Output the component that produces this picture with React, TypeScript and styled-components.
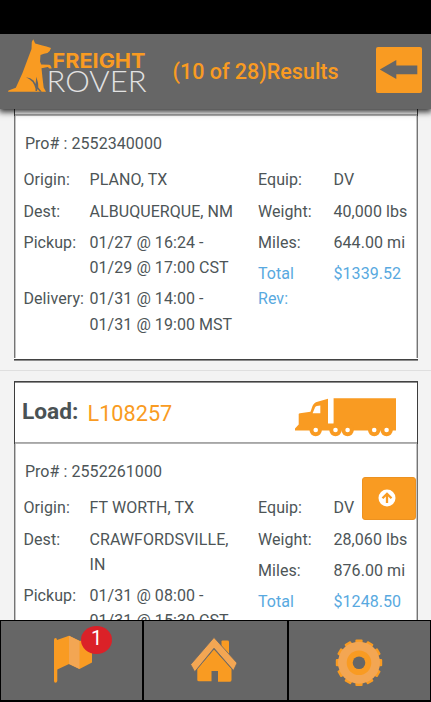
import React from "react";
import styled, { createGlobalStyle } from "styled-components";

const ORANGE = "#f99b22";
const PALE = "#f3a653";
const GREY = "#666666";

const GlobalStyle = createGlobalStyle`
  * { box-sizing: border-box; }
  body { margin: 0; background: #f3f3f3; font-family: Roboto, "Liberation Sans", sans-serif; }
`;

const Screen = styled.div`
  display: flex;
  flex-direction: column;
  width: 431px;
  height: 702px;
  overflow: hidden;
  background: #f3f3f3;
`;

const StatusBar = styled.div`
  flex: 0 0 34px;
  background: #000;
`;

const Header = styled.header`
  flex: 0 0 75px;
  display: flex;
  align-items: flex-start;
  background: ${GREY};
  box-shadow: 0 2px 6px 1px rgba(0, 0, 0, 0.8);
  z-index: 2;
`;

const Logo = styled.svg`
  flex: 0 0 160px;
  height: 75px;
`;

const Title = styled.h1`
  flex: 1;
  margin: 24px 0 0 12.5px;
  font-size: 21.5px;
  line-height: 28px;
  font-weight: 500;
  white-space: nowrap;
  color: ${ORANGE};
`;

const BackButton = styled.button`
  width: 46px;
  height: 46px;
  margin: 12.5px 9px 0 0;
  padding: 0;
  border: 0;
  border-radius: 2px;
  background: ${ORANGE};
  svg { display: block; }
`;

const List = styled.main`
  flex: 1;
  min-height: 0;
  overflow: hidden;
`;

const Slot = styled.section<{ $scrolled?: boolean }>`
  height: 328px;
  margin-top: ${(p) => (p.$scrolled ? "-66px" : "0")};
  padding: 10px 13.5px;
  border-bottom: 1px solid #dfdfdf;
`;

const Card = styled.article`
  height: 307px;
  border-top: 1px solid #424242;
  border-bottom: 1px solid #424242;
  box-shadow: 0 1px #8c8c8c, inset 0 1px #8c8c8c;
  background: #fff;
`;

const CardHead = styled.div`
  display: flex;
  align-items: flex-start;
  height: 62px;
  padding-left: 7.5px;
  border: solid #3c3c3c;
  border-width: 0 1px;
  box-shadow: inset 0 -1px #b2b2b2, inset 0 -2px #a6a6a6, inset 0 1px #8c8c8c;
`;

const LoadLabel = styled.span`
  margin-top: 16px;
  width: 65.5px;
  font-size: 22.700px;
  line-height: 28px;
  font-weight: 700;
  color: #4a5254;
`;

const LoadNumber = styled.span`
  flex: 1;
  margin-top: 18px;
  font-size: 21.700px;
  line-height: 28px;
  color: ${ORANGE};
`;

const Truck = styled.svg`
  width: 102px;
  height: 40px;
  margin: 15px 20px 0 0;
`;

const CardBody = styled.div`
  height: 242px;
  padding: 15px 0 0 9px;
  border: solid #747474;
  border-width: 0 1px;
  box-shadow: inset 1px 0 #c4c4c4, inset -1px 0 #c4c4c4;
  font-size: 16px;
  line-height: 25.25px;
  letter-spacing: 0.06px;
  color: #4d5557;
`;

const Pro = styled.div`
  margin: 0 0 11px 1.4px;
  letter-spacing: 0.06px;
`;

const Columns = styled.div`
  display: grid;
  grid-template-columns: 234.5px 1fr;
  align-items: start;
`;

const Fields = styled.dl<{ $label: number }>`
  display: grid;
  grid-template-columns: ${(p) => p.$label}px 1fr;
  row-gap: 6px;
  margin: 0;
  white-space: pre-line;
`;

const Cell = styled.div<{ $blue?: boolean }>`
  color: ${(p) => (p.$blue ? "#58a9e0" : "inherit")};
`;

const TopButton = styled.button`
  position: absolute;
  left: 362px;
  top: 477px;
  display: flex;
  align-items: flex-start;
  width: 54px;
  height: 43px;
  padding: 11px 0 0 14.5px;
  border: 1px solid #ec9221;
  border-radius: 3px;
  background: ${ORANGE};
  z-index: 3;
`;

const Nav = styled.nav`
  flex: 0 0 82px;
  display: grid;
  grid-template-columns: 141px 143px 141px;
  gap: 2px;
  padding: 1px 1px 2px;
  background: #000;
  z-index: 2;
`;

const Tab = styled.div`
  position: relative;
  background: ${GREY};
  svg { display: block; width: 100%; height: 79px; }
`;

const Badge = styled.span`
  position: absolute;
  left: 80px;
  top: 5px;
  width: 31px;
  height: 28px;
  border-radius: 50%;
  background: #db2128;
  color: #fff;
  font-size: 20px;
  line-height: 24px;
  text-align: center;
`;

type Field = [string, string];

function LoadCard({ load, pro, left, right, rev, scrolled }: {
  load?: string; pro: string; left: Field[]; right: Field[]; rev: string; scrolled?: boolean;
}) {
  return (
    <Slot $scrolled={scrolled}>
      <Card>
        <CardHead>
          {load && (
            <>
              <LoadLabel>Load:</LoadLabel>
              <LoadNumber>{load}</LoadNumber>
              <Truck viewBox="295 397 102 40">
                <g fill={ORANGE}>
                  <path d="M333.500 398.200H396V430.500H295V428.500L298.700 424.500V414Q299 413.300 300 413.300L310.500 411.700L312.500 406Q314 402.500 317.500 401.800L328 398.800V423.500H333.500Z" />
                  {[315.7, 335.5, 347.6, 374.2, 386.6].map((x) => (
                    <circle key={x} cx={x} cy="430" r="6.200" />
                  ))}
                </g>
                <path d="M328.900 397.800H333.200V422.700H328.900Z" fill="#fff" />
                <path d="M312.600 413.300L315 407.500Q316 405.600 320.300 405.600V413.300Z" fill="#fff" />
                <g fill="#fff">
                  {[315.7, 335.5, 347.6, 374.2, 386.6].map((x) => (
                    <circle key={x} cx={x} cy="430" r="2.300" />
                  ))}
                </g>
              </Truck>
            </>
          )}
        </CardHead>
        <CardBody>
          <Pro>Pro# : {pro}</Pro>
          <Columns>
            <Fields $label={66}>
              {left.map(([k, v]) => (
                <React.Fragment key={k}><Cell>{k}</Cell><Cell>{v}</Cell></React.Fragment>
              ))}
            </Fields>
            <Fields $label={75.5}>
              {right.map(([k, v]) => (
                <React.Fragment key={k}><Cell>{k}</Cell><Cell>{v}</Cell></React.Fragment>
              ))}
              <Cell $blue>{"Total\nRev:"}</Cell><Cell $blue>{rev}</Cell>
            </Fields>
          </Columns>
        </CardBody>
      </Card>
    </Slot>
  );
}

const teeth = Array.from({ length: 12 }, (_, i) => i * 30);

export default function App() {
  return (
    <>
      <GlobalStyle />
      <Screen>
        <StatusBar />
        <Header>
          <Logo viewBox="0 34 160 75">
            <path fill={ORANGE} d="M33.200 39.300L35.200 43.500Q42 45.500 46.500 46.500L51 48L49.700 51Q48 53.600 44 53.800L40.500 55L40 61.500L41.200 64.500L49 64.700Q51 65 51.700 68.500H49.500L47.800 66.900L41.500 68.300L42.500 78L43.700 87.500L46 91.700H8Q7.800 90 10.500 89.700L15.800 87.700L22.500 73L31.500 49L31.800 42Z" />
            <path fill={GREY} d="M26 77.300Q30.500 77.800 33.500 80.500L35.600 84L36.300 76.700Q38.600 83 38.300 87.500L41.800 91.700H39.800L37.500 89L37 91L35.500 91V88.500Q33.500 80.500 26 77.300Z" />
            <text x="52.500" y="68" fontFamily="Inter, sans-serif" fontSize="19.700" fontWeight="700" fill={ORANGE} textLength="93" lengthAdjust="spacingAndGlyphs">FREIGHT</text>
            <text x="46.500" y="91.700" fontFamily="Lato, sans-serif" fontSize="28.700" fontWeight="300" fill="#e2e2e2" textLength="100" lengthAdjust="spacingAndGlyphs">ROVER</text>
          </Logo>
          <Title>(10 of 28)Results</Title>
          <BackButton aria-label="Back">
            <svg width="46" height="46" viewBox="0 0 46 46">
              <path fill={GREY} d="M3.800 22.500L20.300 13V18.500H41.300V27.300H20.300V32Z" />
            </svg>
          </BackButton>
        </Header>
        <List>
          <LoadCard
            scrolled
            pro="2552340000"
            left={[["Origin:", "PLANO, TX"], ["Dest:", "ALBUQUERQUE, NM"], ["Pickup:", "01/27 @ 16:24 -\n01/29 @ 17:00 CST"], ["Delivery:", "01/31 @ 14:00 -\n01/31 @ 19:00 MST"]]}
            right={[["Equip:", "DV"], ["Weight:", "40,000 lbs"], ["Miles:", "644.00 mi"]]}
            rev="$1339.52"
          />
          <LoadCard
            load="L108257"
            pro="2552261000"
            left={[["Origin:", "FT WORTH, TX"], ["Dest:", "CRAWFORDSVILLE,\nIN"], ["Pickup:", "01/31 @ 08:00 -\n01/31 @ 15:30 CST"]]}
            right={[["Equip:", "DV"], ["Weight:", "28,060 lbs"], ["Miles:", "876.00 mi"]]}
            rev="$1248.50"
          />
        </List>
        <TopButton aria-label="Back to top">
          <svg width="18" height="18" viewBox="0 0 18 18">
            <circle cx="9" cy="9" r="8.500" fill="#fff" />
            <path d="M9 14V5M4.500 9.300L9 4.800L13.500 9.300" fill="none" stroke={ORANGE} strokeWidth="2.300" />
          </svg>
        </TopButton>
        <Nav>
          <Tab>
            <svg viewBox="1 621 141 79">
              <path fill={ORANGE} d="M57 640L69 635.700L80 641L92 637V662.500L79.500 669L69 664L57.300 669.500V681Q57 682.700 55.500 682.700Q54 682.700 54 681V640Q54 638 55.500 638Q57 638 57 640Z" />
              <path fill={PALE} d="M69 635.700L79.500 641V669L69 664Z" />
            </svg>
            <Badge>1</Badge>
          </Tab>
          <Tab>
            <svg viewBox="144 621 143 79">
              <path fill={ORANGE} d="M221.500 641.500Q221.500 640.600 222.500 640.600H227.500Q229 640.600 229 642V658L221.500 650Z" />
              <path fill={ORANGE} d="M214 649.500L231.500 669V680Q231.500 681.700 230 681.700H218V671H211.500V681.300H199Q197.300 681.300 197.300 680V669Z" />
              <path fill={PALE} stroke={GREY} strokeWidth=".8" d="M214 637.500L237 663L233.500 670.500L214 648.200L194.700 671.800L190.700 664.500Z" />
            </svg>
          </Tab>
          <Tab>
            <svg viewBox="289 621 141 79">
              <g fill={ORANGE}>
                {teeth.map((a) => (
                  <rect key={a} x="355.400" y="639.500" width="7.200" height="8" rx="1" transform={`rotate(${a} 359 662.700)`} />
                ))}
              </g>
              <circle cx="359" cy="662.700" r="21" fill={PALE} />
              <circle cx="359" cy="662.700" r="12.300" fill={ORANGE} />
              <circle cx="359" cy="662.700" r="6.300" fill={GREY} />
            </svg>
          </Tab>
        </Nav>
      </Screen>
    </>
  );
}
